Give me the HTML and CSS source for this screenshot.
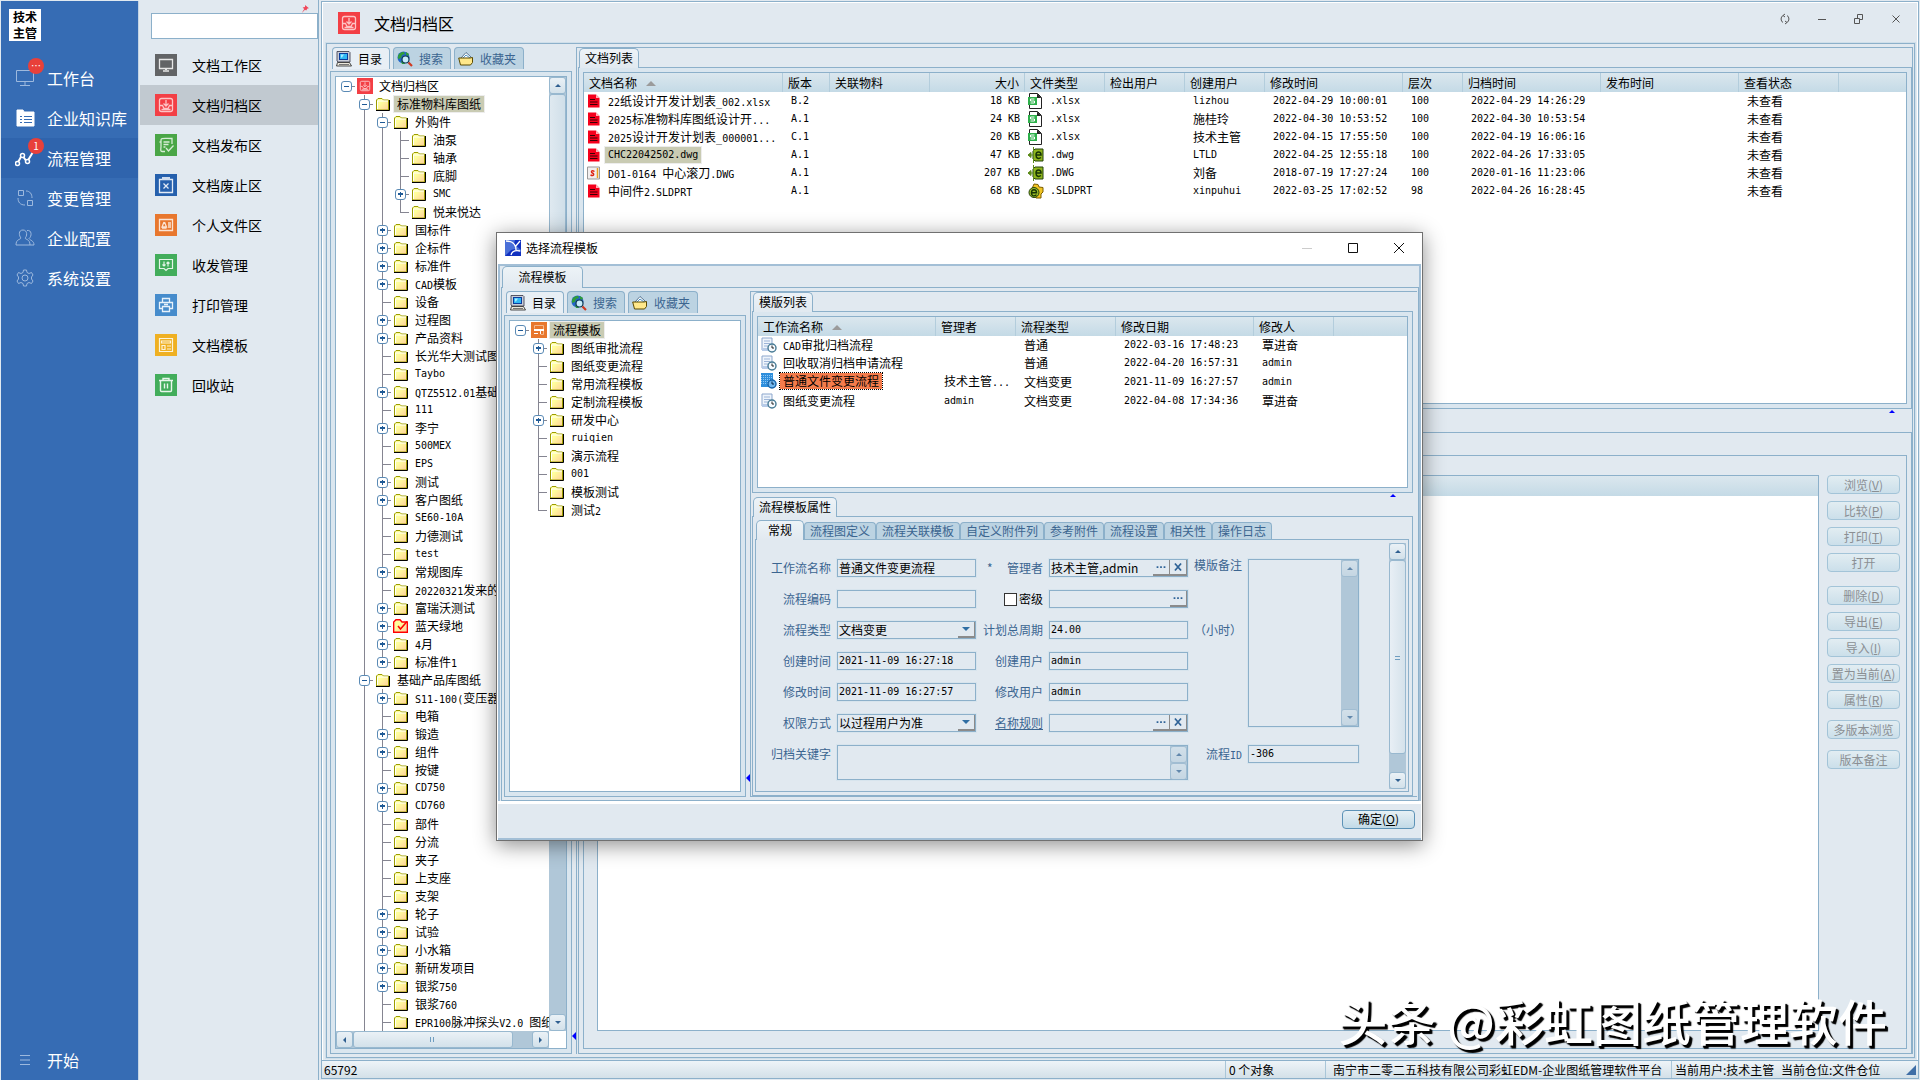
FILE: index.html
```html
<!DOCTYPE html>
<html lang="zh-CN">
<head>
<meta charset="utf-8">
<title>文档归档区</title>
<link rel="stylesheet" href="styles.css">
</head>
<body>
<svg class="defs" aria-hidden="true">
  <defs>
    <linearGradient id="gf" x1="0" y1="0" x2="1" y2="1"><stop offset=".35" stop-color="#ffff9c"/><stop offset="1" stop-color="#ffce9c"/></linearGradient>
    <symbol id="fd" viewBox="0 0 16 16"><path d="M1.5 14V4L3 2.5h4L8.500 4H13.500V14z" fill="url(#gf)" stroke="#9c9c00"/><path d="M1 14.500H14.500V4" fill="none" stroke="#000"/><path d="M2.500 13V5H13" fill="none" stroke="#fff"/></symbol>
    <symbol id="fdr" viewBox="0 0 16 16"><path d="M1.500 14V4L3 2.500h4L8.500 4H13.500V14z" fill="url(#gf)"/><path d="M.7 14.300V4L3 1.700h4L9 4h5.300v10.300z" fill="none" stroke="#f00" stroke-width="1.400"/><path d="M5 8l2.500 3L14 3.500" fill="none" stroke="#f00" stroke-width="1.500"/></symbol>
    <symbol id="arch" viewBox="0 0 22 22"><path fill="#f33f45" d="M0 0h22v22H0z"/><g fill="none" stroke="#fdc4c5" stroke-width="1.300"><rect x="4.500" y="4.500" width="13" height="13" rx="2"/><path d="M11 6v6M8.500 9.500L11 12l2.500-2.500M5 11.500h2.500l1.500 3h4l1.500-3H17M6.500 15.500h9"/></g></symbol>
    <symbol id="flowroot" viewBox="0 0 16 16"><path fill="#e8772e" d="M0 0h16v16H0z"/><path d="M3.500 6.500v-3h9v9h-3" fill="none" stroke="#f3b78c"/><path fill="#fff" d="M3 7h10v2H3zM3 11h4v1H3zM9 9h1v3H9z"/></symbol>
    <symbol id="pc" viewBox="0 0 16 16"><path fill="#c9cdd8" stroke="#334" stroke-width=".8" d="M1 .5h12l1 1V11H2L1 10z"/><path fill="#0b3c9c" d="M3 2h9v7H3z"/><path fill="#31b8f4" d="M4 3h7v5H4z"/><path fill="#a6ecff" d="M5 3.500h3l-2 3H5z"/><path fill="#ece8dc" stroke="#222" stroke-width=".8" d="M1.500 11.500h12l2 3.500H.5z"/><path stroke="#777" d="M3 13.500h10"/></symbol>
    <symbol id="find" viewBox="0 0 16 16"><circle cx="6.500" cy="6.500" r="6" fill="#2367c8"/><path fill="#2f9c3a" d="M1 6c0-3 3-5.500 6-5l1 2-3 1-1 3-3 1zM4 10l3 0 1 3H5zM9 1l3 2-1 2-2-1z"/><circle cx="8.500" cy="8.500" r="3.500" fill="#c5ecfa" stroke="#123a54" stroke-width="1.200"/><path d="M11.500 11.500L15 15" stroke="#d03a20" stroke-width="2.200"/></symbol>
    <symbol id="fav" viewBox="0 0 16 16"><path fill="#fff" stroke="#357" stroke-width=".8" d="M3 7l5-5.500L13 6v6H3z"/><path d="M5 7l3-3 4 3" stroke="#4d94c8" fill="none"/><path fill="#ffe88a" stroke="#5b4a00" d="M.7 7H12l2.500-.5v5l-2 2.500h-10z"/></symbol>
    <symbol id="red" viewBox="0 0 13 14"><path fill="#f5001c" d="M1 .5h8l3.500 3.500v9.500H1z"/><path fill="#ffb3b8" d="M9 .5L12.500 4H9z"/><path stroke="#3a0005" d="M3 5.500h5M3 8h7.500M3 10.500h7.500"/></symbol>
    <symbol id="sld" viewBox="0 0 13 14"><path fill="#f2efef" stroke="#999" d="M.5 1h12v12H.5z"/><path d="M7.500 5.500c-3-2-4 .7-2 1.500s1.500 3.500-2 2" stroke="#d21" stroke-width="1.400" fill="none"/><path d="M10.500 2v10" stroke="#e8a020" stroke-width="1.500"/></symbol>
    <symbol id="xls" viewBox="0 0 16 16"><path fill="#fff" stroke="#222" d="M1.500.5h8l4 4v11h-12z"/><path fill="#222" d="M9 .5V5h4.500z"/><path fill="#2db04a" d="M0 4h9v8H0z"/><path d="M6.500 6h-4v2h4v2h-4" fill="none" stroke="#fff"/></symbol>
    <symbol id="dwg" viewBox="0 0 16 16"><path fill="#8fb51d" stroke="#23420a" d="M7 2h8v12H7l-2-2V4z"/><path d="M8 8h5c0-4-5-4-5 0s3 4 5 2.500" fill="none" stroke="#173504" stroke-width="1.500"/><path d="M5.500 0v16M0 8h6M0 8l3-2.500v5z" stroke="#5d8b1a" fill="#5d8b1a"/></symbol>
    <symbol id="prt" viewBox="0 0 16 16"><path fill="#f2c522" stroke="#7b5d00" d="M6 1l4 .5L11 4l4 .5V9l-2 2v4H8L3 8z"/><circle cx="6" cy="9.500" r="5" fill="#9bbd27" stroke="#23420a"/><path d="M3.500 9.800h5c0-4-5-4-5 0s3 3.500 5 2" fill="none" stroke="#173504" stroke-width="1.400"/></symbol>
    <symbol id="wf" viewBox="0 0 16 16"><path fill="#eef4fb" stroke="#8da7cd" d="M1 1h10v12H1z"/><path stroke="#9db5d8" d="M3 4h6M3 6.500h6M3 9h4"/><path fill="#b7cbe8" d="M1 11h7v3H1z"/><circle cx="11" cy="11" r="4" fill="#f7fbff" stroke="#467a94" stroke-width="1.400"/><path d="M11 8.500V11h2" fill="none" stroke="#222"/></symbol>
    <symbol id="wfs" viewBox="0 0 16 16"><path fill="#2f8fdc" d="M0 0h12v7H0zM0 7h8v7H0z"/><path stroke="#8fc8f5" stroke-dasharray="1 1" d="M0 2.500h12M0 4.500h12M0 6.500h12M0 8.500h9M0 10.500h8"/><circle cx="11" cy="11" r="4" fill="#72b8ef" stroke="#1462a8" stroke-width="1.400"/><path d="M11 8.500V11h2" fill="none" stroke="#024"/></symbol>
    <symbol id="dots" viewBox="0 0 16 16"><path fill="#2f6397" d="M3 7h2v2H3zM7 7h2v2H7zM11 7h2v2h-2z"/></symbol>
    <symbol id="ex" viewBox="0 0 16 16"><path d="M4.500 4l7 8M11.500 4l-7 8" fill="none" stroke="#2f6397" stroke-width="2"/></symbol>
  </defs>
</svg>

<nav class="side">
  <div class="avatar">技术<br>主管</div>
  <a class="nav dim" href="#"><svg viewBox="0 0 20 20"><path d="M1.500 2.500h17v11h-17zM10 14v3M5 17.500h10"/></svg>工作台<span class="badge">…</span></a>
  <a class="nav" href="#"><svg viewBox="0 0 20 20"><path fill="#fff" d="M2 2h6l1 2h10v14H2z"/><path stroke="#366cb4" d="M5 8.500h2M9 8.500h8M5 11.500h2M9 11.500h8M5 14.500h2M9 14.500h8"/></svg>企业知识库</a>
  <a class="nav on" href="#"><svg viewBox="0 0 20 20"><path stroke-width="2" d="M2 16l5-9 5 7 6-10"/><g fill="#2f64ad" stroke-width="1.500"><circle cx="2.500" cy="15.500" r="2"/><circle cx="7.500" cy="7.500" r="2"/><circle cx="12.500" cy="13.500" r="2"/></g></svg>流程管理<span class="badge">1</span></a>
  <a class="nav dim" href="#"><svg viewBox="0 0 20 20"><path d="M3.500 2.500h5v5h-5zM12.500 12.500h5v5h-5zM11 3c4 0 6 3 6 7M3 10c0 4 2 7 7 7" /></svg>变更管理</a>
  <a class="nav dim" href="#"><svg viewBox="0 0 20 20"><path d="M8 2c5 0 4 7 2 8 1 2 5 1 5 7H1c0-6 4-5 5-7-2-2-3-8 2-8zM12 2.500c5-1 5 6 2 8 1 2 5 2 5 6.500h-4"/></svg>企业配置</a>
  <a class="nav dim" href="#"><svg viewBox="0 0 20 20"><circle cx="10" cy="10" r="3"/><path d="M8.500 2h3l.5 2.500 2 1 2.500-1 1.500 2.500-1.500 2v2l1.500 2-1.500 2.500-2.500-1-2 1-.5 2.500h-3L8 15.500l-2-1-2.500 1L2 13l1.500-2V9L2 7l1.500-2.500 2.500 1 2-1z"/></svg>系统设置</a>
  <a class="nav dim start" href="#"><svg viewBox="0 0 20 20"><path d="M5 5.500h10M5 10h10M5 14.500h10"/></svg>开始</a>
</nav>

<aside class="menu">
  <div class="pin"><svg viewBox="0 0 10 10"><path d="M5 0l5 4-2 .5L6.500 7 5 6 1 10l3-5-2-2 3-.5z" fill="#f0475a"/></svg></div>
  <input class="search" type="text" aria-label="查找">
  <a class="mi" href="#"><svg viewBox="0 0 22 22"><path fill="#626466" d="M0 0h22v22H0z"/><g fill="none" stroke="#e6e6e6" stroke-width="1.300"><path d="M4.500 5.500h13v9h-13zM8 17h6"/><path d="M10 15h2" stroke-width="2"/></g></svg>文档工作区</a>
  <a class="mi on" href="#"><svg><use href="#arch"/></svg>文档归档区</a>
  <a class="mi" href="#"><svg viewBox="0 0 22 22"><path fill="#4aa647" d="M0 0h22v22H0z"/><path d="M10 17.500H7c-2 0-1-3-1-5V6c0-2 1-1.500 11-1.500V10M6 8H4.500M8.500 8h6M8.500 10.500h5M8.500 13h2M11 14l2.500 3 5-5.500" fill="none" stroke="#d6edd5" stroke-width="1.300"/></svg>文档发布区</a>
  <a class="mi" href="#"><svg viewBox="0 0 22 22"><path fill="#2560ad" d="M0 0h22v22H0z"/><path d="M4.500 5.500h13v13h-13zM8.500 9.500l5 5M13.500 9.500l-5 5" fill="none" stroke="#e3ebf6" stroke-width="1.300"/><path fill="#cfdcee" d="M7 3h8v3H7z"/></svg>文档废止区</a>
  <a class="mi" href="#"><svg viewBox="0 0 22 22"><path fill="#e8772e" d="M0 0h22v22H0z"/><path d="M4.500 5.500h13v11h-13zM7 14h4.500M9 8l-2 5h4.500L9.500 8" fill="none" stroke="#fbe3d3" stroke-width="1.300"/><path fill="#f6c7a6" d="M13 8h3v6h-3z"/></svg>个人文件区</a>
  <a class="mi" href="#"><svg viewBox="0 0 22 22"><path fill="#42ad5b" d="M0 0h22v22H0z"/><path d="M4.500 5.500h13v9H13l-2 2-2-2H4.500zM9 7.500V12M7.500 10.500L9 12l1.500-1.500M13 12.500V8M11.500 9.500L13 8l1.500 1.500" fill="none" stroke="#e2f4e6" stroke-width="1.200"/></svg>收发管理</a>
  <a class="mi" href="#"><svg viewBox="0 0 22 22"><path fill="#468ccc" d="M0 0h22v22H0z"/><path d="M7.500 8V4.500h7V8M7 14.500H4.500v-6h13v6H15M7.500 12.500h7v5h-7zM9 10.500h4" fill="none" stroke="#e6f1fa" stroke-width="1.300"/></svg>打印管理</a>
  <a class="mi" href="#"><svg viewBox="0 0 22 22"><path fill="#efb022" d="M0 0h22v22H0z"/><path d="M4.500 4.500h13v13h-13zM6.500 7h9v2h-9zM7 11.500h3v4H7zM12 12h4M12 15h4" fill="none" stroke="#fdf3d8" stroke-width="1.200"/></svg>文档模板</a>
  <a class="mi" href="#"><svg viewBox="0 0 22 22"><path fill="#42ad5b" d="M0 0h22v22H0z"/><path d="M4 6.500h14M8 6V4.500h6V6M5.500 7v9.500c0 1 0 1 1 1h9c1 0 1 0 1-1V7M9.500 9.500v5M12.500 9.500v5" fill="none" stroke="#e8f6eb" stroke-width="1.400"/></svg>回收站</a>
</aside>

<main class="main">
  <header class="head">
    <svg class="i22"><use href="#arch"/></svg>
    <h1>文档归档区</h1>
    <div class="winbtns">
      <button type="button" aria-label="刷新"><svg viewBox="0 0 12 12"><path d="M4 2.500C1.500 4 1.500 8 4 9.500M8 9.500c2.500-1.500 2.500-5.500 0-7M6 1L4 2.500 6 4M6 8l2 1.500L6 11"/></svg></button>
      <button type="button" aria-label="最小化"><svg viewBox="0 0 12 12"><path d="M2 6.500h8"/></svg></button>
      <button type="button" aria-label="还原"><svg viewBox="0 0 12 12"><path d="M1.500 5.500h5v5h-5zM4.500 5V1.500h5v5H7"/></svg></button>
      <button type="button" aria-label="关闭"><svg viewBox="0 0 12 12"><path d="M2.500 2.500l7 7M9.500 2.500l-7 7"/></svg></button>
    </div>
  </header>

  <div class="work">
    <section class="dir">
      <div class="itabs">
        <button type="button" class="itab on"><svg class="i16"><use href="#pc"/></svg>目录</button>
        <button type="button" class="itab"><svg class="i16"><use href="#find"/></svg>搜索</button>
        <button type="button" class="itab"><svg class="i16"><use href="#fav"/></svg>收藏夹</button>
      </div>
      <div class="page fill">
        <div class="box treebox">
          <ul class="tree">
            <li><div class="row"><button type="button" class="tg open" aria-label="折叠"></button><svg class="i16"><use href="#arch"/></svg><span class="lb">文档归档区</span></div>
            <ul>
              <li><div class="row"><button type="button" class="tg open" aria-label="折叠"></button><svg class="i16"><use href="#fd"/></svg><span class="lb sel">标准物料库图纸</span></div>
              <ul>
                <li><div class="row"><button type="button" class="tg open" aria-label="折叠"></button><svg class="i16"><use href="#fd"/></svg><span class="lb">外购件</span></div>
                <ul>
                  <li><div class="row"><svg class="i16"><use href="#fd"/></svg><span class="lb">油泵</span></div></li>
                  <li><div class="row"><svg class="i16"><use href="#fd"/></svg><span class="lb">轴承</span></div></li>
                  <li><div class="row"><svg class="i16"><use href="#fd"/></svg><span class="lb">底脚</span></div></li>
                  <li><div class="row"><button type="button" class="tg" aria-label="展开"></button><svg class="i16"><use href="#fd"/></svg><span class="lb m">SMC</span></div></li>
                  <li><div class="row"><svg class="i16"><use href="#fd"/></svg><span class="lb">悦来悦达</span></div></li>
                </ul></li>
                <li><div class="row"><button type="button" class="tg" aria-label="展开"></button><svg class="i16"><use href="#fd"/></svg><span class="lb">国标件</span></div></li>
                <li><div class="row"><button type="button" class="tg" aria-label="展开"></button><svg class="i16"><use href="#fd"/></svg><span class="lb">企标件</span></div></li>
                <li><div class="row"><button type="button" class="tg" aria-label="展开"></button><svg class="i16"><use href="#fd"/></svg><span class="lb">标准件</span></div></li>
                <li><div class="row"><button type="button" class="tg" aria-label="展开"></button><svg class="i16"><use href="#fd"/></svg><span class="lb"><span class="m">CAD</span>模板</span></div></li>
                <li><div class="row"><svg class="i16"><use href="#fd"/></svg><span class="lb">设备</span></div></li>
                <li><div class="row"><button type="button" class="tg" aria-label="展开"></button><svg class="i16"><use href="#fd"/></svg><span class="lb">过程图</span></div></li>
                <li><div class="row"><button type="button" class="tg" aria-label="展开"></button><svg class="i16"><use href="#fd"/></svg><span class="lb">产品资料</span></div></li>
                <li><div class="row"><svg class="i16"><use href="#fd"/></svg><span class="lb">长光华大测试图</span></div></li>
                <li><div class="row"><svg class="i16"><use href="#fd"/></svg><span class="lb m">Taybo</span></div></li>
                <li><div class="row"><button type="button" class="tg" aria-label="展开"></button><svg class="i16"><use href="#fd"/></svg><span class="lb"><span class="m">QTZ5512.01</span>基础</span></div></li>
                <li><div class="row"><svg class="i16"><use href="#fd"/></svg><span class="lb m">111</span></div></li>
                <li><div class="row"><button type="button" class="tg" aria-label="展开"></button><svg class="i16"><use href="#fd"/></svg><span class="lb">李宁</span></div></li>
                <li><div class="row"><svg class="i16"><use href="#fd"/></svg><span class="lb m">500MEX</span></div></li>
                <li><div class="row"><svg class="i16"><use href="#fd"/></svg><span class="lb m">EPS</span></div></li>
                <li><div class="row"><button type="button" class="tg" aria-label="展开"></button><svg class="i16"><use href="#fd"/></svg><span class="lb">测试</span></div></li>
                <li><div class="row"><button type="button" class="tg" aria-label="展开"></button><svg class="i16"><use href="#fd"/></svg><span class="lb">客户图纸</span></div></li>
                <li><div class="row"><svg class="i16"><use href="#fd"/></svg><span class="lb m">SE60-10A</span></div></li>
                <li><div class="row"><svg class="i16"><use href="#fd"/></svg><span class="lb">力德测试</span></div></li>
                <li><div class="row"><svg class="i16"><use href="#fd"/></svg><span class="lb m">test</span></div></li>
                <li><div class="row"><button type="button" class="tg" aria-label="展开"></button><svg class="i16"><use href="#fd"/></svg><span class="lb">常规图库</span></div></li>
                <li><div class="row"><svg class="i16"><use href="#fd"/></svg><span class="lb"><span class="m">20220321</span>发来的</span></div></li>
                <li><div class="row"><button type="button" class="tg" aria-label="展开"></button><svg class="i16"><use href="#fd"/></svg><span class="lb">富瑞沃测试</span></div></li>
                <li><div class="row"><button type="button" class="tg" aria-label="展开"></button><svg class="i16"><use href="#fdr"/></svg><span class="lb">蓝天绿地</span></div></li>
                <li><div class="row"><button type="button" class="tg" aria-label="展开"></button><svg class="i16"><use href="#fd"/></svg><span class="lb"><span class="m">4</span>月</span></div></li>
                <li><div class="row"><button type="button" class="tg" aria-label="展开"></button><svg class="i16"><use href="#fd"/></svg><span class="lb">标准件<span class="m">1</span></span></div></li>
              </ul></li>
              <li class="more"><div class="row"><button type="button" class="tg open" aria-label="折叠"></button><svg class="i16"><use href="#fd"/></svg><span class="lb">基础产品库图纸</span></div>
              <ul>
                <li><div class="row"><button type="button" class="tg" aria-label="展开"></button><svg class="i16"><use href="#fd"/></svg><span class="lb"><span class="m">S11-100(</span>变压器</span></div></li>
                <li><div class="row"><svg class="i16"><use href="#fd"/></svg><span class="lb">电箱</span></div></li>
                <li><div class="row"><button type="button" class="tg" aria-label="展开"></button><svg class="i16"><use href="#fd"/></svg><span class="lb">锻造</span></div></li>
                <li><div class="row"><button type="button" class="tg" aria-label="展开"></button><svg class="i16"><use href="#fd"/></svg><span class="lb">组件</span></div></li>
                <li><div class="row"><svg class="i16"><use href="#fd"/></svg><span class="lb">按键</span></div></li>
                <li><div class="row"><button type="button" class="tg" aria-label="展开"></button><svg class="i16"><use href="#fd"/></svg><span class="lb m">CD750</span></div></li>
                <li><div class="row"><button type="button" class="tg" aria-label="展开"></button><svg class="i16"><use href="#fd"/></svg><span class="lb m">CD760</span></div></li>
                <li><div class="row"><svg class="i16"><use href="#fd"/></svg><span class="lb">部件</span></div></li>
                <li><div class="row"><svg class="i16"><use href="#fd"/></svg><span class="lb">分流</span></div></li>
                <li><div class="row"><svg class="i16"><use href="#fd"/></svg><span class="lb">夹子</span></div></li>
                <li><div class="row"><svg class="i16"><use href="#fd"/></svg><span class="lb">上支座</span></div></li>
                <li><div class="row"><svg class="i16"><use href="#fd"/></svg><span class="lb">支架</span></div></li>
                <li><div class="row"><button type="button" class="tg" aria-label="展开"></button><svg class="i16"><use href="#fd"/></svg><span class="lb">轮子</span></div></li>
                <li><div class="row"><button type="button" class="tg" aria-label="展开"></button><svg class="i16"><use href="#fd"/></svg><span class="lb">试验</span></div></li>
                <li><div class="row"><button type="button" class="tg" aria-label="展开"></button><svg class="i16"><use href="#fd"/></svg><span class="lb">小水箱</span></div></li>
                <li><div class="row"><button type="button" class="tg" aria-label="展开"></button><svg class="i16"><use href="#fd"/></svg><span class="lb">新研发项目</span></div></li>
                <li><div class="row"><button type="button" class="tg" aria-label="展开"></button><svg class="i16"><use href="#fd"/></svg><span class="lb">银浆<span class="m">750</span></span></div></li>
                <li><div class="row"><svg class="i16"><use href="#fd"/></svg><span class="lb">银浆<span class="m">760</span></span></div></li>
                <li class="more"><div class="row"><svg class="i16"><use href="#fd"/></svg><span class="lb"><span class="m">EPR100</span>脉冲探头<span class="m">V2.0 </span>图纸</span></div></li>
              </ul></li>
            </ul></li>
          </ul>
          <div class="vs"><button type="button" class="sb up" aria-label="向上"></button><div class="thumb half"></div><button type="button" class="sb down" aria-label="向下"></button></div>
          <div class="hs"><button type="button" class="sb left" aria-label="向左"></button><div class="thumb"></div><button type="button" class="sb right" aria-label="向右"></button></div>
        </div>
      </div>
    </section>

    <section class="grp">
      <div class="split-l"></div>
      <div class="strip"><button type="button" class="tab">文档列表</button></div>
      <div class="page upper">
        <div class="box">
          <table class="list">
            <colgroup><col class="w199"><col class="w47"><col class="w100"><col class="w95"><col class="w80"><col class="w80"><col class="w80"><col class="w138"><col class="w60"><col class="w138"><col class="w138"><col class="w100"><col></colgroup>
            <thead><tr><th>文档名称<span class="sort"></span></th><th>版本</th><th>关联物料</th><th class="r">大小</th><th>文件类型</th><th>检出用户</th><th>创建用户</th><th>修改时间</th><th>层次</th><th>归档时间</th><th>发布时间</th><th>查看状态</th><th></th></tr></thead>
            <tbody>
              <tr><td class="n"><svg class="i13"><use href="#red"/></svg><span class="lb"><span class="m">22</span>纸设计开发计划表<span class="m">_002.xlsx</span></span></td><td class="m">B.2</td><td></td><td class="m r">18 KB</td><td class="m n"><svg class="i16"><use href="#xls"/></svg> .xlsx</td><td></td><td class="m">lizhou</td><td class="m">2022-04-29 10:00:01</td><td class="m">100</td><td class="m">2022-04-29 14:26:29</td><td></td><td>未查看</td><td></td></tr>
              <tr><td class="n"><svg class="i13"><use href="#red"/></svg><span class="lb"><span class="m">2025</span>标准物料库图纸设计开<span class="m">...</span></span></td><td class="m">A.1</td><td></td><td class="m r">24 KB</td><td class="m n"><svg class="i16"><use href="#xls"/></svg> .xlsx</td><td></td><td>施桂玲</td><td class="m">2022-04-30 10:53:52</td><td class="m">100</td><td class="m">2022-04-30 10:53:54</td><td></td><td>未查看</td><td></td></tr>
              <tr><td class="n"><svg class="i13"><use href="#red"/></svg><span class="lb"><span class="m">2025</span>设计开发计划表<span class="m">_000001...</span></span></td><td class="m">C.1</td><td></td><td class="m r">20 KB</td><td class="m n"><svg class="i16"><use href="#xls"/></svg> .xlsx</td><td></td><td>技术主管</td><td class="m">2022-04-15 17:55:50</td><td class="m">100</td><td class="m">2022-04-19 16:06:16</td><td></td><td>未查看</td><td></td></tr>
              <tr><td class="n"><svg class="i13"><use href="#red"/></svg><span class="lb sel m">CHC22042502.dwg</span></td><td class="m">A.1</td><td></td><td class="m r">47 KB</td><td class="m n"><svg class="i16"><use href="#dwg"/></svg> .dwg</td><td></td><td class="m">LTLD</td><td class="m">2022-04-25 12:55:18</td><td class="m">100</td><td class="m">2022-04-26 17:33:05</td><td></td><td>未查看</td><td></td></tr>
              <tr><td class="n"><svg class="i13"><use href="#sld"/></svg><span class="lb"><span class="m">D01-0164 </span>中心滚刀<span class="m">.DWG</span></span></td><td class="m">A.1</td><td></td><td class="m r">207 KB</td><td class="m n"><svg class="i16"><use href="#dwg"/></svg> .DWG</td><td></td><td>刘备</td><td class="m">2018-07-19 17:27:24</td><td class="m">100</td><td class="m">2020-01-16 11:23:06</td><td></td><td>未查看</td><td></td></tr>
              <tr><td class="n"><svg class="i13"><use href="#red"/></svg><span class="lb">中间件<span class="m">2.SLDPRT</span></span></td><td class="m">A.1</td><td></td><td class="m r">68 KB</td><td class="m n"><svg class="i16"><use href="#prt"/></svg> .SLDPRT</td><td></td><td class="m">xinpuhui</td><td class="m">2022-03-25 17:02:52</td><td class="m">98</td><td class="m">2022-04-26 16:28:45</td><td></td><td>未查看</td><td></td></tr>
            </tbody>
          </table>
        </div>
      </div>
      <div class="split tall"></div>
      <div class="lower">
        <div class="detail">
          <div class="box grow"><div class="hdr"></div></div>
          <div class="acts">
            <button type="button" class="btn" disabled>浏览(<u>V</u>)</button>
            <button type="button" class="btn" disabled>比较(<u>P</u>)</button>
            <button type="button" class="btn" disabled>打印(<u>T</u>)</button>
            <button type="button" class="btn" disabled>打开</button>
            <button type="button" class="btn g8" disabled>删除(<u>D</u>)</button>
            <button type="button" class="btn" disabled>导出(<u>E</u>)</button>
            <button type="button" class="btn" disabled>导入(<u>I</u>)</button>
            <button type="button" class="btn" disabled>置为当前(<u>A</u>)</button>
            <button type="button" class="btn" disabled>属性(<u>R</u>)</button>
            <button type="button" class="btn g4" disabled>多版本浏览</button>
            <button type="button" class="btn g4" disabled>版本备注</button>
          </div>
        </div>
      </div>
    </section>
  </div>

  <footer class="status">
    <span class="s1">65792</span><span class="s2">0 个对象</span><span class="s3">南宁市二零二五科技有限公司彩虹EDM-企业图纸管理软件平台</span><span class="s4">当前用户:技术主管</span><span class="s5">当前仓位:文件仓位</span>
    <svg viewBox="0 0 10 10"><path d="M10 0v10H0z" fill="#3f6ea6"/></svg>
  </footer>
</main>

<div class="dlg" role="dialog" aria-labelledby="dt">
  <div class="dtitle">
    <svg class="i16" viewBox="0 0 16 16"><path fill="#4a6fd8" d="M0 0h16v16H0z"/><path fill="#1030c0" d="M10 0h6v10L9 4zM0 16l6-6 4-1 6 3v4z"/><path d="M1 1c6 0 10 3 10 9M6 15c1-4 4-5 9-4M15 1l-5 6" fill="none" stroke="#fff" stroke-width="1.300"/></svg>
    <h2 id="dt">选择流程模板</h2>
    <div class="winbtns">
      <button type="button" aria-label="最小化" disabled><svg viewBox="0 0 12 12"><path d="M1 6.500h10" stroke="#ccc"/></svg></button>
      <button type="button" aria-label="最大化"><svg viewBox="0 0 12 12"><path d="M1.500 1.500h9v9h-9z" stroke="#111"/></svg></button>
      <button type="button" aria-label="关闭"><svg viewBox="0 0 12 12"><path d="M1 1l10 10M11 1L1 11" stroke="#111"/></svg></button>
    </div>
  </div>
  <div class="dbody">
    <div class="strip big"><button type="button" class="tab wide">流程模板</button></div>
    <div class="dpage">
      <section class="dir">
        <div class="itabs">
          <button type="button" class="itab on"><svg class="i16"><use href="#pc"/></svg>目录</button>
          <button type="button" class="itab"><svg class="i16"><use href="#find"/></svg>搜索</button>
          <button type="button" class="itab"><svg class="i16"><use href="#fav"/></svg>收藏夹</button>
        </div>
        <div class="page fill">
          <div class="box">
            <ul class="tree">
              <li><div class="row"><button type="button" class="tg open" aria-label="折叠"></button><svg class="i16"><use href="#flowroot"/></svg><span class="lb sel">流程模板</span></div>
              <ul>
                <li><div class="row"><button type="button" class="tg" aria-label="展开"></button><svg class="i16"><use href="#fd"/></svg><span class="lb">图纸审批流程</span></div></li>
                <li><div class="row"><svg class="i16"><use href="#fd"/></svg><span class="lb">图纸变更流程</span></div></li>
                <li><div class="row"><svg class="i16"><use href="#fd"/></svg><span class="lb">常用流程模板</span></div></li>
                <li><div class="row"><svg class="i16"><use href="#fd"/></svg><span class="lb">定制流程模板</span></div></li>
                <li><div class="row"><button type="button" class="tg" aria-label="展开"></button><svg class="i16"><use href="#fd"/></svg><span class="lb">研发中心</span></div></li>
                <li><div class="row"><svg class="i16"><use href="#fd"/></svg><span class="lb m">ruiqien</span></div></li>
                <li><div class="row"><svg class="i16"><use href="#fd"/></svg><span class="lb">演示流程</span></div></li>
                <li><div class="row"><svg class="i16"><use href="#fd"/></svg><span class="lb m">001</span></div></li>
                <li><div class="row"><svg class="i16"><use href="#fd"/></svg><span class="lb">模板测试</span></div></li>
                <li><div class="row"><svg class="i16"><use href="#fd"/></svg><span class="lb">测试<span class="m">2</span></span></div></li>
              </ul></li>
            </ul>
          </div>
        </div>
      </section>
      <section class="grp dgrp">
        <div class="split-l low"></div>
        <div class="strip"><button type="button" class="tab">模版列表</button></div>
        <div class="page tpl">
          <div class="box">
            <table class="list">
              <colgroup><col class="w178"><col class="w80"><col class="w100"><col class="w138"><col class="w80"><col></colgroup>
              <thead><tr><th>工作流名称<span class="sort"></span></th><th>管理者</th><th>流程类型</th><th>修改日期</th><th>修改人</th><th></th></tr></thead>
              <tbody>
                <tr><td class="n"><svg class="i16"><use href="#wf"/></svg><span class="lb"><span class="m">CAD</span>审批归档流程</span></td><td></td><td>普通</td><td class="m">2022-03-16 17:48:23</td><td>覃进奋</td><td></td></tr>
                <tr><td class="n"><svg class="i16"><use href="#wf"/></svg><span class="lb">回收取消归档申请流程</span></td><td></td><td>普通</td><td class="m">2022-04-20 16:57:31</td><td class="m">admin</td><td></td></tr>
                <tr><td class="n"><svg class="i16"><use href="#wfs"/></svg><span class="lb hot">普通文件变更流程</span></td><td>技术主管<span class="m">...</span></td><td>文档变更</td><td class="m">2021-11-09 16:27:57</td><td class="m">admin</td><td></td></tr>
                <tr><td class="n"><svg class="i16"><use href="#wf"/></svg><span class="lb">图纸变更流程</span></td><td class="m">admin</td><td>文档变更</td><td class="m">2022-04-08 17:34:36</td><td>覃进奋</td><td></td></tr>
              </tbody>
            </table>
          </div>
        </div>
        <div class="split"></div>
        <div class="strip low"><button type="button" class="tab">流程模板属性</button></div>
        <div class="prop">
          <div class="ptabs">
            <button type="button" class="tab on">常规</button><button type="button" class="ptab">流程图定义</button><button type="button" class="ptab">流程关联模板</button><button type="button" class="ptab">自定义附件列</button><button type="button" class="ptab">参考附件</button><button type="button" class="ptab">流程设置</button><button type="button" class="ptab">相关性</button><button type="button" class="ptab">操作日志</button>
          </div>
          <div class="fpage">
            <form class="form">
              <label for="f1">工作流名称</label><div class="fld"><input id="f1" type="text" value="普通文件变更流程"></div>
              <label for="f2" class="req"><span>*</span>管理者</label><div class="fld"><input id="f2" type="text" value="技术主管,admin"><button type="button" class="eb" aria-label="选择"><svg><use href="#dots"/></svg></button><button type="button" class="eb" aria-label="清除"><svg><use href="#ex"/></svg></button></div>
              <label for="f3" class="top">模版备注</label><div class="fld memo"><textarea id="f3"></textarea><div class="vs off"><button type="button" class="sb up" aria-label="向上"></button><button type="button" class="sb down" aria-label="向下"></button></div></div>
              <label for="f4">流程编码</label><div class="fld"><input id="f4" type="text"></div>
              <label for="f5" class="chk"><input id="f5" type="checkbox">密级</label><div class="fld"><input type="text" aria-label="密级"><button type="button" class="eb" aria-label="选择"><svg><use href="#dots"/></svg></button></div>
              <label for="f6" class="c1">流程类型</label><div class="fld"><select id="f6"><option>文档变更</option></select><span class="eb dd"></span></div>
              <label for="f7">计划总周期</label><div class="fld"><input id="f7" class="m" type="text" value="24.00"></div><span class="unit">（小时）</span>
              <label for="f8" class="c1">创建时间</label><div class="fld"><input id="f8" class="m" type="text" value="2021-11-09 16:27:18"></div>
              <label for="f9">创建用户</label><div class="fld"><input id="f9" class="m" type="text" value="admin"></div>
              <label for="f10" class="c1">修改时间</label><div class="fld"><input id="f10" class="m" type="text" value="2021-11-09 16:27:57"></div>
              <label for="f11">修改用户</label><div class="fld"><input id="f11" class="m" type="text" value="admin"></div>
              <label for="f12" class="c1">权限方式</label><div class="fld"><select id="f12"><option>以过程用户为准</option></select><span class="eb dd"></span></div>
              <label for="f13"><u>名称规则</u></label><div class="fld"><input id="f13" type="text"><button type="button" class="eb" aria-label="选择"><svg><use href="#dots"/></svg></button><button type="button" class="eb" aria-label="清除"><svg><use href="#ex"/></svg></button></div>
              <label for="f14" class="c1">归档关键字</label><div class="fld keys"><textarea id="f14"></textarea><div class="vs off"><button type="button" class="sb up" aria-label="向上"></button><button type="button" class="sb down" aria-label="向下"></button></div></div>
              <label for="f15">流程<span class="m">ID</span></label><div class="fld"><input id="f15" class="m" type="text" value="-306"></div>
            </form>
            <div class="vs"><button type="button" class="sb up" aria-label="向上"></button><div class="thumb most"></div><button type="button" class="sb down" aria-label="向下"></button></div>
          </div>
        </div>
      </section>
    </div>
  </div>
  <div class="dfoot"><button type="button" class="btn ok">确定(<u>O</u>)</button></div>
</div>

<div class="mark">头条 @彩虹图纸管理软件</div>
</body>
</html>
```
FILE: styles.css
```css
* { box-sizing: border-box; }
:root { --line: #8cb0ca; --soft: #cfdfea; --bg: #e1e9f0; --ink: #3b6590; }
body {
  margin: 0; height: 100vh; display: flex; overflow: hidden; position: relative;
  background: var(--bg); color: #000;
  font: 12px/18px "Noto Sans CJK SC", sans-serif;
}
button, input, select, textarea { font: inherit; color: inherit; margin: 0; }
button { padding: 0; border: 0; background: none; }
a { color: inherit; text-decoration: none; }
h1, h2 { margin: 0; font-weight: 400; }
ul { list-style: none; margin: 0; padding: 0; }
.defs { position: absolute; width: 0; height: 0; }
.m { font-family: "DejaVu Sans Mono", "Liberation Mono", monospace; font-size: 10px; white-space: pre; }
.i13 { width: 13px; height: 14px; flex: none; }
.i16 { width: 16px; height: 16px; flex: none; }
.i22 { width: 22px; height: 22px; flex: none; }

/* left navigation */
.side { width: 138px; flex: none; margin: 1px 0 0 1px; background: #366cb4; color: #fff; display: flex; flex-direction: column; border-right: 1px solid #c3d3e4; font-size: 16px; line-height: 22px; }
.avatar { width: 32px; height: 32px; margin: 8px 0 17px 8px; background: #fff; color: #000; font: 700 12px/16px "Noto Sans CJK SC", sans-serif; text-align: center; }
.nav { height: 40px; flex: none; display: flex; align-items: center; gap: 12px; padding-left: 14px; position: relative; }
.nav.on { background: #2f64ad; }
.nav svg { width: 20px; height: 20px; fill: none; stroke: #fff; stroke-width: 1; }
.nav.dim svg { stroke: #9db9de; }
.badge { position: absolute; left: 27px; top: 0; width: 16px; height: 16px; border-radius: 8px; background: #e8403a; font-size: 10px; line-height: 16px; text-align: center; }
.start { margin-top: auto; }

/* area menu */
.menu { width: 179px; flex: none; border-right: 1px solid var(--line); margin-left: 1px; display: flex; flex-direction: column; font-size: 14px; }
.pin { height: 13px; padding: 5px 8px 0 0; text-align: right; line-height: 0; }
.pin svg { width: 10px; height: 8px; }
.search { margin: 0 0 6px 11px; height: 26px; border: 1px solid var(--line); background: #fff; }
.mi { height: 40px; display: flex; align-items: center; gap: 15px; padding-left: 15px; }
.mi.on { background: #c1c9d0; }
.mi svg { width: 22px; height: 22px; }

/* frame */
.main { flex: 1; min-width: 0; margin: 1px 1px 1px 2px; border: 1px solid var(--line); box-shadow: inset 0 0 0 1px #fff; display: flex; flex-direction: column; }
.head { height: 41px; display: flex; align-items: center; padding-left: 16px; gap: 14px; font-size: 16px; }
.head h1 { font-size: 16px; }
.winbtns { margin-left: auto; display: flex; }
.winbtns button { width: 37px; height: 22px; display: grid; place-items: center; }
.winbtns svg { width: 12px; height: 12px; fill: none; stroke: #555; }
.head .winbtns { padding: 0 4px 8px 0; }
.work { flex: 1; min-height: 0; margin: 0 3px 2px 4px; padding: 3px 1px 3px 3px; border: 1px solid var(--line); box-shadow: 0 0 0 1px var(--soft); display: flex; gap: 4px; }

.dir { width: 242px; flex: none; display: flex; flex-direction: column; min-height: 0; }
.itabs { height: 24px; flex: none; display: flex; gap: 3px; padding-left: 2px; align-items: flex-start; }
.itab { height: 22px; padding: 0 7px 0 3px; display: flex; align-items: center; gap: 6px; border: 1px solid var(--line); border-bottom: 0; border-radius: 4px 4px 0 0; background: #bcd3e2; color: var(--ink); }
.itab.on { background: #e8eff5; color: #000; }
.page { border: 1px solid var(--line); padding: 4px; background: #dae6ef; display: flex; min-height: 0; }
.fill { flex: 1; }
.box { flex: 1; min-width: 0; border: 1px solid var(--line); background: #fff; overflow: hidden; }
.treebox { display: grid; grid-template: minmax(0, 1fr) 17px / minmax(0, 1fr) 17px; }

/* tree */
.tree { overflow: hidden; }
.tree ul { padding-left: 18px; }
.tree ul li { background: linear-gradient(#858591, #858591) 10px 0 / 1px 100% no-repeat; }
.tree ul li:last-child:not(.more) { background-size: 1px 9px; }
.row { height: 18px; display: flex; align-items: center; padding-left: 21px; background: linear-gradient(#858591, #858591) 10px 9px / 9px 1px no-repeat; white-space: nowrap; }
.tg { width: 11px; height: 11px; flex: none; margin: 0 5px 0 -16px; border: 1px solid #5a8ab5; border-radius: 3px; background: linear-gradient(#1f5a96, #1f5a96) 2px 3px / 5px 2px no-repeat, linear-gradient(#1f5a96, #1f5a96) 4px 2px / 1px 5px no-repeat, #fff; }
.tg.open { background: linear-gradient(#1f5a96, #1f5a96) 2px 4px / 5px 1px no-repeat, #fff; }
.lb { display: inline-block; height: 16px; line-height: 16px; margin-left: 3px; padding: 0 3px; }
.lb.sel { background: #c9cbb3; box-shadow: 0 0 0 1px #ededed; }
.lb.hot { background: #f47c4c; outline: 1px dotted #000; }

/* scroll bars */
.vs { width: 17px; display: flex; flex-direction: column; background: #b0c7d8; }
.hs { display: flex; background: #b0c7d8; }
.sb, .thumb { border: 1px solid #98b8cf; border-radius: 3px; background: linear-gradient(#eaf1f6, #d3e1ea); }
.sb { width: 17px; height: 17px; flex: none; display: grid; place-items: center; }
.sb::before { content: ""; border: 3px solid transparent; border-bottom-color: #2f5f90; margin-top: -3px; }
.sb.down::before { transform: rotate(180deg); margin-top: 3px; }
.sb.left::before { transform: rotate(-90deg); margin: 0 3px 0 0; }
.sb.right::before { transform: rotate(90deg); margin: 0 0 0 3px; }
.sb.down { margin-top: auto; }
.sb.right { margin-left: auto; }
.hs .thumb { width: 160px; background: linear-gradient(#6f9dc0, #6f9dc0) 76px 5px / 1px 5px no-repeat, linear-gradient(#6f9dc0, #6f9dc0) 79px 5px / 1px 5px no-repeat, linear-gradient(#eaf1f6, #d3e1ea); }
.half { flex: 0 0 45%; background: linear-gradient(90deg, #dfe9f0, #d0dfe9); }
.most { flex: 0 0 194px; background: linear-gradient(#6f9dc0, #6f9dc0) 5px 95px / 5px 1px no-repeat, linear-gradient(#6f9dc0, #6f9dc0) 5px 98px / 5px 1px no-repeat, linear-gradient(90deg, #e8eff5, #d5e2eb); }
.off .sb { opacity: .6; }

/* grouped panes */
.grp { flex: 1; min-width: 0; position: relative; display: flex; flex-direction: column; border: 1px solid var(--line); border-bottom: 0; padding-left: 1px; }
.split-l { position: absolute; left: -5px; bottom: 14px; border: 4px solid transparent; border-left: 0; border-right: 4px solid #00f; }
.split-l.low { bottom: 14px; }
.strip { height: 19px; flex: none; display: flex; padding-left: 1px; }
.tab { height: 20px; line-height: 16px; padding: 0 5px 2px; position: relative; border: 1px solid var(--line); border-bottom: 0; border-radius: 5px 5px 0 0; background: linear-gradient(#edf3f7, #e1e9f0); }
.upper { flex: 0 0 34%; }
.split { height: 4px; flex: none; position: relative; }
.split::after { content: ""; position: absolute; right: 17px; top: 1px; border: 3px solid transparent; border-top: 0; border-bottom-color: #00f; }
.split.tall { height: 23px; }
.lower { flex: 1; min-height: 0; border: 1px solid var(--line); padding: 22px 4px 4px; display: flex; }
.detail { flex: 1; border: 1px solid var(--line); padding: 19px 6px 17px 13px; display: flex; gap: 8px; }
.hdr { height: 20px; background: linear-gradient(#dbe7ee, #c4dae6); }
.acts { width: 73px; display: flex; flex-direction: column; gap: 7px; }
.btn { height: 19px; flex: none; border: 1px solid #7ba9c8; border-radius: 4px; background: linear-gradient(#e6f0f5, #c2dae7); line-height: 16px; white-space: nowrap; }
.btn:disabled { color: #8b8f93; border-color: #a3c4d8; background: linear-gradient(#e2edf2, #cbdfea); }
.g8 { margin-top: 7px; }
.g4 { margin-top: 4px; }

/* lists */
.list { width: 100%; border-spacing: 0; table-layout: fixed; }
.list th { height: 19px; padding: 0 0 0 5px; font-weight: 400; text-align: left; line-height: 18px; background: linear-gradient(#dbe7ee, #c4dae6); border-right: 1px solid #b3cddc; white-space: nowrap; }
.list th:last-child { border-right: 0; }
.list td { height: 18px; padding: 0 0 0 8px; white-space: nowrap; line-height: 18px; overflow: hidden; }
.list td.m { white-space: pre; }
.list td.n { padding-left: 3px; vertical-align: top; }
.list td.n svg { vertical-align: top; margin-top: 1px; }
.list td.n svg.i13 { margin: 2px 2px 0 0; }
.list .lb { vertical-align: top; margin-top: 1px; }
.list .r { text-align: right; padding-right: 5px; }
.sort { display: inline-block; margin-left: 9px; border: 5px solid transparent; border-top: 0; border-bottom: 5px solid #9b9b9b; vertical-align: 2px; }
.w199 { width: 199px; } .w178 { width: 178px; } .w138 { width: 138px; } .w100 { width: 100px; }
.w95 { width: 95px; } .w80 { width: 80px; } .w60 { width: 60px; } .w47 { width: 47px; }

/* status bar */
.status { height: 18px; flex: none; display: flex; line-height: 17px; border-top: 1px solid var(--line); background: linear-gradient(#eef4f8, #d3e0e8); position: relative; }
.status span { padding-left: 3px; border-left: 1px solid #a9c6d8; white-space: nowrap; }
.status .s1 { flex: 1; border: 0; padding-left: 2px; }
.status .s2 { width: 100px; }
.status .s3 { width: 346px; padding-left: 7px; }
.status .s4 { width: 107px; }
.status .s5 { width: 140px; border: 0; }
.status svg { position: absolute; right: 2px; bottom: 3px; width: 10px; height: 10px; }

/* template dialog */
.dlg { position: absolute; left: 496px; top: 232px; width: 927px; height: 609px; display: flex; flex-direction: column; background: #fff; border: 1px solid #707070; box-shadow: 0 4px 20px rgba(0, 0, 0, .45); }
.dtitle { height: 31px; flex: none; display: flex; align-items: center; gap: 5px; padding: 0 0 2px 8px; }
.dtitle h2 { font-size: 12px; }
.dtitle .winbtns button { width: 46px; }
.dbody { flex: 1; min-height: 0; margin: 0 1px; border: solid #a3bfd6; border-width: 2px 2px 0; padding-left: 1px; background: var(--bg); display: flex; flex-direction: column; }
.strip.big { height: 21px; }
.tab.wide { width: 81px; height: 22px; line-height: 18px; }
.dpage { flex: 1; min-height: 0; border: 1px solid var(--line); padding: 3px 1px 3px 2px; display: flex; gap: 4px; }
.dgrp { border-right: 0; border-bottom: 1px solid var(--line); padding-right: 4px; }
.dgrp .page.tpl { flex: 0 0 182px; }
.prop { flex: 1; min-height: 0; border: 1px solid var(--line); padding: 3px 3px 3px 2px; display: flex; flex-direction: column; }
.ptabs { height: 19px; flex: none; display: flex; align-items: flex-end; }
.ptabs .tab { width: 48px; margin-bottom: -1px; margin-left: 1px; }
.ptab { height: 17px; line-height: 16px; padding: 0 5px; border: 1px solid var(--line); border-bottom: 0; border-radius: 4px 4px 0 0; background: #bcd3e2; color: var(--ink); }
.fpage { flex: 1; min-height: 0; border: 1px solid var(--line); padding: 3px 2px 2px 0; display: flex; justify-content: space-between; }
.form { display: grid; grid-template-columns: 75px 139px 61px 139px 48px 111px; grid-auto-rows: 18px; gap: 13px 6px; padding-top: 16px; color: var(--ink); }
.form label { text-align: right; white-space: nowrap; }
.form .top { line-height: 12px; }
.form .c1 { grid-column: 1; }
.form .req { display: flex; justify-content: space-between; padding-left: 5px; }
.form .chk { display: flex; justify-content: flex-end; align-items: center; gap: 2px; color: #000; }
.chk input { appearance: none; width: 13px; height: 13px; border: 1px solid #333; background: #fff; }
.fld { border: 1px solid var(--line); box-shadow: 0 0 0 1px #d7e4ed; display: flex; min-width: 0; color: #000; }
.fld input, .fld select, .fld textarea { flex: 1; min-width: 0; width: 0; padding: 0 0 0 1px; border: 0; background: none; appearance: none; resize: none; line-height: 16px; outline: 0; }
.fld .m { font-size: 10px; }
.unit { white-space: nowrap; }
.memo { grid-row: 1 / span 6; grid-column: 6; height: 168px; }
.keys { grid-column: 2 / span 3; height: 35px; }
.eb { width: 17px; flex: none; line-height: 0; border: solid #8b8b8b; border-width: 0 1px 2px 0; }
.eb svg { width: 16px; height: 14px; }
.dd { display: grid; place-items: center; }
.dd::before { content: ""; border: 4px solid transparent; border-top: 4px solid #2f6ea3; border-bottom: 0; }
.dfoot { height: 39px; flex: none; margin: 0 1px; border-top: 3px solid #fff; border-bottom: 2px solid #a3bfd6; background: var(--bg); display: flex; justify-content: flex-end; align-items: center; padding: 0 6px 4px 0; }
.ok { width: 73px; border-color: #5d93b7; }

.mark { position: absolute; right: 33px; bottom: 24px; font: 500 49px/72px "Noto Sans CJK SC", sans-serif; white-space: nowrap; color: #fff; text-shadow: 2px 2px 1px #000, 3px 3px 1px #000; pointer-events: none; }
```
